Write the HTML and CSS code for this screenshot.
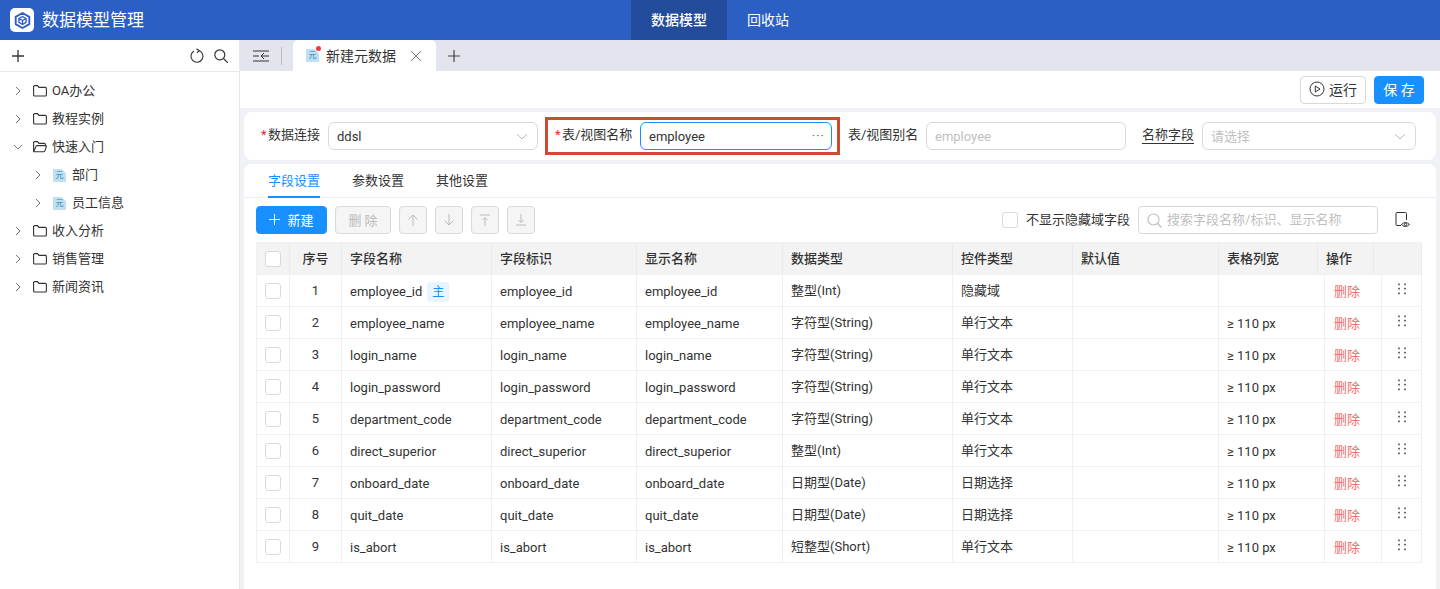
FILE: index.html
```html
<!DOCTYPE html>
<html lang="zh">
<head>
    <meta charset="UTF-8">
    <title>数据模型管理</title>
    <link rel="stylesheet" href="styles.css">
</head>
<body>
    <!-- 顶部导航 -->
    <header class="topbar">
        <div class="brand">
            <span class="logo">
                <svg width="17" height="17" viewBox="0 0 20 20" fill="none" stroke="#2b5fc4" stroke-width="2.200" stroke-linejoin="round"><path d="M10 1.200 18 5.700v8.600l-8 4.500-8-4.500V5.700z"/><path d="M10 5.300 14.200 7.700v4.600L10 14.700l-4.200-2.400V7.700z" stroke-width="1.600"/><path d="M5.800 7.700 10 10l4.200-2.300M10 10v4.700" stroke-width="1.600"/></svg>
            </span>
            <span class="brand-name">数据模型管理</span>
        </div>
        <nav class="topnav">
            <a class="topnav-item active">数据模型</a>
            <a class="topnav-item">回收站</a>
        </nav>
    </header>

    <div class="main">
        <!-- 左侧树 -->
        <aside class="sidebar">
            <div class="side-tools">
                <svg class="side-add" width="14" height="14" viewBox="0 0 14 14" stroke="#333" stroke-width="1.300"><path d="M7 1v12M1 7h12"/></svg>
                <svg class="side-refresh" width="16" height="16" viewBox="0 0 16 16" fill="none" stroke="#333" stroke-width="1.100"><path d="M9.800 2.500A6 6 0 1 1 5 3"/><path d="M7.500 .8 10 2.600 8 4.800"/></svg>
                <svg width="16" height="16" viewBox="0 0 16 16" fill="none" stroke="#333" stroke-width="1.200"><circle cx="6.800" cy="6.800" r="5"/><path d="m10.500 10.500 4.300 4.300"/></svg>
            </div>
            <ul class="tree">
                <li class="tree-item">
                    <svg class="arrow" width="6" height="10" viewBox="0 0 6 10" fill="none"><path d="m1 1 4 4-4 4"/></svg>
                    <svg class="folder" width="14" height="12" viewBox="0 0 14 12" fill="none"><path d="M.6 1.600q0-1 1-1h3l1.400 1.800h6.400q1 0 1 1v6.600q0 1-1 1H1.600q-1 0-1-1z"/></svg>
                    OA办公
                </li>
                <li class="tree-item">
                    <svg class="arrow" width="6" height="10" viewBox="0 0 6 10" fill="none"><path d="m1 1 4 4-4 4"/></svg>
                    <svg class="folder" width="14" height="12" viewBox="0 0 14 12" fill="none"><path d="M.6 1.600q0-1 1-1h3l1.400 1.800h6.400q1 0 1 1v6.600q0 1-1 1H1.600q-1 0-1-1z"/></svg>
                    教程实例
                </li>
                <li class="tree-item">
                    <svg class="arrow open" width="10" height="6" viewBox="0 0 10 6" fill="none"><path d="m1 1 4 4 4-4"/></svg>
                    <svg class="folder" width="14" height="12" viewBox="0 0 14 12" fill="none"><path d="M.6 10.400V1.600q0-1 1-1h3l1.400 1.800h5.400q1 0 1 1v1.200M.6 10.900 3 5.200q.2-.6 1-.6h8.800q.8 0 .6.700l-1.600 4.900q-.2.600-1 .6H1.200q-.6 0-.6-.6z"/></svg>
                    快速入门
                </li>
                <li class="tree-item child">
                    <svg class="arrow" width="6" height="10" viewBox="0 0 6 10" fill="none"><path d="m1 1 4 4-4 4"/></svg>
                    <span class="doc-icon">元</span>
                    部门
                </li>
                <li class="tree-item child">
                    <svg class="arrow" width="6" height="10" viewBox="0 0 6 10" fill="none"><path d="m1 1 4 4-4 4"/></svg>
                    <span class="doc-icon">元</span>
                    员工信息
                </li>
                <li class="tree-item">
                    <svg class="arrow" width="6" height="10" viewBox="0 0 6 10" fill="none"><path d="m1 1 4 4-4 4"/></svg>
                    <svg class="folder" width="14" height="12" viewBox="0 0 14 12" fill="none"><path d="M.6 1.600q0-1 1-1h3l1.400 1.800h6.400q1 0 1 1v6.600q0 1-1 1H1.600q-1 0-1-1z"/></svg>
                    收入分析
                </li>
                <li class="tree-item">
                    <svg class="arrow" width="6" height="10" viewBox="0 0 6 10" fill="none"><path d="m1 1 4 4-4 4"/></svg>
                    <svg class="folder" width="14" height="12" viewBox="0 0 14 12" fill="none"><path d="M.6 1.600q0-1 1-1h3l1.400 1.800h6.400q1 0 1 1v6.600q0 1-1 1H1.600q-1 0-1-1z"/></svg>
                    销售管理
                </li>
                <li class="tree-item">
                    <svg class="arrow" width="6" height="10" viewBox="0 0 6 10" fill="none"><path d="m1 1 4 4-4 4"/></svg>
                    <svg class="folder" width="14" height="12" viewBox="0 0 14 12" fill="none"><path d="M.6 1.600q0-1 1-1h3l1.400 1.800h6.400q1 0 1 1v6.600q0 1-1 1H1.600q-1 0-1-1z"/></svg>
                    新闻资讯
                </li>
            </ul>
        </aside>

        <section class="content">
            <!-- 标签栏 -->
            <div class="tabbar">
                <svg class="collapse" width="16" height="12" viewBox="0 0 16 12" fill="none" stroke="#333"><path d="M0 1h16M0 11h16M0 6h6M16 6H9M11 3 8 6l3 3"/></svg>
                <span class="tabbar-sep"></span>
                <div class="page-tab">
                    <span class="doc-icon">元<i class="dot"></i></span>
                    <span class="page-tab-name">新建元数据</span>
                    <svg width="12" height="12" viewBox="0 0 12 12" stroke="#777"><path d="m1 1 10 10M11 1 1 11"/></svg>
                </div>
                <svg class="tab-add" width="12" height="12" viewBox="0 0 12 12" stroke="#444" stroke-width="1.200"><path d="M6 0v12M0 6h12"/></svg>
            </div>

            <div class="actions">
                <button class="btn btn-run">
                    <svg width="16" height="16" viewBox="0 0 16 16" fill="none" stroke="#333"><circle cx="8" cy="8" r="7"/><path d="M6.300 5v6L11 8z"/></svg>
                    运行
                </button>
                <button class="btn btn-save">保 存</button>
            </div>

            <!-- 基本信息 -->
            <div class="form-card">
                <label class="form-label w-59"><em>*</em>数据连接</label>
                <div class="field w-210"><span>ddsl</span>
                    <svg class="chevron" width="12" height="7" viewBox="0 0 12 7" fill="none"><path d="m1 1 5 5 5-5"/></svg>
                </div>
                <div class="marked">
                    <label class="form-label w-78"><em>*</em>表/视图名称</label>
                    <div class="field focus w-192"><span>employee</span><b class="more">···</b></div>
                </div>
                <label class="form-label w-70">表/视图别名</label>
                <div class="field w-200 empty"><span>employee</span></div>
                <label class="form-label under">名称字段</label>
                <div class="field w-214 empty"><span>请选择</span>
                    <svg class="chevron" width="12" height="7" viewBox="0 0 12 7" fill="none"><path d="m1 1 5 5 5-5"/></svg>
                </div>
            </div>

            <!-- 字段设置 -->
            <div class="fields-card">
                <div class="sub-tabs">
                    <a class="sub-tab active">字段设置</a>
                    <a class="sub-tab">参数设置</a>
                    <a class="sub-tab">其他设置</a>
                </div>
                <div class="fields-body">
                    <div class="toolbar">
                        <button class="btn btn-new">
                            <svg width="11" height="11" viewBox="0 0 11 11" stroke="#fff"><path d="M5.500 0v11M0 5.500h11"/></svg>
                            新建
                        </button>
                        <button class="btn btn-off btn-del">删 除</button>
                        <button class="btn btn-off btn-icon"><svg width="12" height="12" viewBox="0 0 12 12" fill="none" stroke="#bbb"><path d="M6 12V1M1.500 5.500 6 1l4.500 4.500"/></svg></button>
                        <button class="btn btn-off btn-icon"><svg width="12" height="12" viewBox="0 0 12 12" fill="none" stroke="#bbb"><path d="M6 0v11M1.500 6.500 6 11l4.500-4.500"/></svg></button>
                        <button class="btn btn-off btn-icon"><svg width="12" height="12" viewBox="0 0 12 12" fill="none" stroke="#bbb"><path d="M1 1h10M6 12V4M3.500 6 6 3.500 8.500 6"/></svg></button>
                        <button class="btn btn-off btn-icon"><svg width="12" height="12" viewBox="0 0 12 12" fill="none" stroke="#bbb"><path d="M1 11h10M6 0v8M3.500 6 6 8.500 8.500 6"/></svg></button>
                        <span class="check check-hide"></span>
                        <span class="hide-label">不显示隐藏域字段</span>
                        <div class="search">
                            <svg width="15" height="15" viewBox="0 0 15 15" fill="none" stroke="#bbb" stroke-width="1.100"><circle cx="6.500" cy="6.500" r="5.500"/><path d="m10.500 10.500 4 4"/></svg>
                            搜索字段名称/标识、显示名称
                        </div>
                        <svg class="eye" width="15" height="16" viewBox="0 0 15 16" fill="none" stroke="#333"><path d="M6 13.500H2q-1 0-1-1V1.500q0-1 1-1h8.500q1 0 1 1V8"/><path d="M6.500 12.500q3.800-4 8 0-4.200 4-8 0z"/><circle cx="10.500" cy="12.500" r="1.200"/></svg>
                    </div>

                    <div class="grid-head">
                        <div class="cell center"><span class="check"></span></div>
                        <div class="cell center">序号</div>
                        <div class="cell">字段名称</div>
                        <div class="cell">字段标识</div>
                        <div class="cell">显示名称</div>
                        <div class="cell">数据类型</div>
                        <div class="cell">控件类型</div>
                        <div class="cell">默认值</div>
                        <div class="cell">表格列宽</div>
                        <div class="cell">操作</div>
                        <div class="cell"></div>
                    </div>

                    <div class="grid-row">
                        <div class="cell center"><span class="check"></span></div>
                        <div class="cell center">1</div>
                        <div class="cell">employee_id<span class="pk">主</span></div>
                        <div class="cell">employee_id</div>
                        <div class="cell">employee_id</div>
                        <div class="cell">整型(Int)</div>
                        <div class="cell">隐藏域</div>
                        <div class="cell"></div>
                        <div class="cell"></div>
                        <div class="cell del">删除</div>
                        <div class="cell center"><span class="grip"></span></div>
                    </div>
                    <div class="grid-row">
                        <div class="cell center"><span class="check"></span></div>
                        <div class="cell center">2</div>
                        <div class="cell">employee_name</div>
                        <div class="cell">employee_name</div>
                        <div class="cell">employee_name</div>
                        <div class="cell">字符型(String)</div>
                        <div class="cell">单行文本</div>
                        <div class="cell"></div>
                        <div class="cell">≥ 110 px</div>
                        <div class="cell del">删除</div>
                        <div class="cell center"><span class="grip"></span></div>
                    </div>
                    <div class="grid-row">
                        <div class="cell center"><span class="check"></span></div>
                        <div class="cell center">3</div>
                        <div class="cell">login_name</div>
                        <div class="cell">login_name</div>
                        <div class="cell">login_name</div>
                        <div class="cell">字符型(String)</div>
                        <div class="cell">单行文本</div>
                        <div class="cell"></div>
                        <div class="cell">≥ 110 px</div>
                        <div class="cell del">删除</div>
                        <div class="cell center"><span class="grip"></span></div>
                    </div>
                    <div class="grid-row">
                        <div class="cell center"><span class="check"></span></div>
                        <div class="cell center">4</div>
                        <div class="cell">login_password</div>
                        <div class="cell">login_password</div>
                        <div class="cell">login_password</div>
                        <div class="cell">字符型(String)</div>
                        <div class="cell">单行文本</div>
                        <div class="cell"></div>
                        <div class="cell">≥ 110 px</div>
                        <div class="cell del">删除</div>
                        <div class="cell center"><span class="grip"></span></div>
                    </div>
                    <div class="grid-row">
                        <div class="cell center"><span class="check"></span></div>
                        <div class="cell center">5</div>
                        <div class="cell">department_code</div>
                        <div class="cell">department_code</div>
                        <div class="cell">department_code</div>
                        <div class="cell">字符型(String)</div>
                        <div class="cell">单行文本</div>
                        <div class="cell"></div>
                        <div class="cell">≥ 110 px</div>
                        <div class="cell del">删除</div>
                        <div class="cell center"><span class="grip"></span></div>
                    </div>
                    <div class="grid-row">
                        <div class="cell center"><span class="check"></span></div>
                        <div class="cell center">6</div>
                        <div class="cell">direct_superior</div>
                        <div class="cell">direct_superior</div>
                        <div class="cell">direct_superior</div>
                        <div class="cell">整型(Int)</div>
                        <div class="cell">单行文本</div>
                        <div class="cell"></div>
                        <div class="cell">≥ 110 px</div>
                        <div class="cell del">删除</div>
                        <div class="cell center"><span class="grip"></span></div>
                    </div>
                    <div class="grid-row">
                        <div class="cell center"><span class="check"></span></div>
                        <div class="cell center">7</div>
                        <div class="cell">onboard_date</div>
                        <div class="cell">onboard_date</div>
                        <div class="cell">onboard_date</div>
                        <div class="cell">日期型(Date)</div>
                        <div class="cell">日期选择</div>
                        <div class="cell"></div>
                        <div class="cell">≥ 110 px</div>
                        <div class="cell del">删除</div>
                        <div class="cell center"><span class="grip"></span></div>
                    </div>
                    <div class="grid-row">
                        <div class="cell center"><span class="check"></span></div>
                        <div class="cell center">8</div>
                        <div class="cell">quit_date</div>
                        <div class="cell">quit_date</div>
                        <div class="cell">quit_date</div>
                        <div class="cell">日期型(Date)</div>
                        <div class="cell">日期选择</div>
                        <div class="cell"></div>
                        <div class="cell">≥ 110 px</div>
                        <div class="cell del">删除</div>
                        <div class="cell center"><span class="grip"></span></div>
                    </div>
                    <div class="grid-row">
                        <div class="cell center"><span class="check"></span></div>
                        <div class="cell center">9</div>
                        <div class="cell">is_abort</div>
                        <div class="cell">is_abort</div>
                        <div class="cell">is_abort</div>
                        <div class="cell">短整型(Short)</div>
                        <div class="cell">单行文本</div>
                        <div class="cell"></div>
                        <div class="cell">≥ 110 px</div>
                        <div class="cell del">删除</div>
                        <div class="cell center"><span class="grip"></span></div>
                    </div>
                </div>
            </div>
        </section>
    </div>
</body>
</html>
```
FILE: styles.css
```css
* {
    box-sizing: border-box;
}

html, body {
    height: 100%;
}

body {
    margin: 0;
    overflow: hidden;
    font-family: Roboto, "Noto Sans CJK SC", sans-serif;
    font-size: 13px;
    line-height: 20px;
    color: #333;
    background-color: #fff;
    display: flex;
    flex-direction: column;
}

/* Barra superior */
.topbar {
    height: 40px;
    flex: none;
    background-color: #2b5fc4;
    color: #fff;
    display: flex;
    position: relative;
}

.brand {
    display: flex;
    align-items: center;
    padding-left: 10px;
    gap: 8px;
}

.logo {
    width: 24px;
    height: 24px;
    border-radius: 5px;
    background-color: #fff;
    display: flex;
    align-items: center;
    justify-content: center;
}

.brand-name {
    font-size: 17px;
}

.topnav {
    display: flex;
    margin-left: 487px;
}

.topnav-item {
    padding: 0 20px;
    font-size: 14px;
    line-height: 40px;
    text-align: center;
}

.topnav-item.active {
    background-color: #234d9c;
    font-weight: 500;
}

.main {
    flex: 1;
    display: flex;
    min-height: 0;
}

/* Arbol */
.sidebar {
    width: 240px;
    flex: none;
    border-right: 1px solid #e6e8ee;
}

.side-tools {
    height: 32px;
    display: flex;
    align-items: center;
    gap: 8px;
    padding: 0 10px 0 11px;
    border-bottom: 1px solid #e6e8ee;
}

.side-add {
    margin-right: auto;
}

.tree {
    list-style: none;
    margin: 5px 0 0;
    padding: 0;
}

.tree-item {
    height: 28px;
    display: flex;
    align-items: center;
    padding-left: 15px;
    font-size: 13px;
}

.tree-item .arrow {
    margin-right: 12px;
}

.tree-item .arrow path {
    stroke: #777;
}

.tree-item .arrow.open {
    margin-left: -2px;
    margin-right: 10px;
}

.tree-item .folder {
    margin-right: 5px;
}

.tree-item .folder path {
    stroke: #333;
    stroke-width: 1.100;
}

.tree-item.child {
    padding-left: 35px;
}

.tree-item.child .doc-icon {
    margin-right: 6px;
}

.doc-icon {
    width: 13px;
    height: 13px;
    flex: none;
    background: linear-gradient(225deg, #fff 3px, #bfe0f3 3px);
    color: #2b7fb5;
    font-size: 8px;
    line-height: 14px;
    text-align: center;
    position: relative;
}

.content {
    flex: 1;
    min-width: 0;
    background-color: #f0f2f6;
    display: flex;
    flex-direction: column;
}

/* Pestanas */
.tabbar {
    height: 31px;
    flex: none;
    background-color: #e2e5ee;
    display: flex;
    align-items: center;
    padding-left: 13px;
}

.tabbar-sep {
    width: 1px;
    height: 18px;
    background-color: #bbb;
    margin: 0 11px 0 12px;
}

.page-tab {
    width: 143px;
    height: 31px;
    background-color: #fff;
    border-radius: 5px 5px 0 0;
    display: flex;
    align-items: center;
    padding-left: 13px;
}

.page-tab-name {
    font-size: 14px;
    margin: 0 14px 0 7px;
}

.dot {
    width: 5px;
    height: 5px;
    border-radius: 50%;
    background-color: #f5363a;
    position: absolute;
    top: -3px;
    right: -2px;
}

.tab-add {
    margin-left: 12px;
}

.actions {
    height: 37px;
    flex: none;
    background-color: #fff;
    display: flex;
    justify-content: flex-end;
    align-items: center;
    gap: 8px;
    padding: 0 16px 0 0;
}

.btn {
    height: 28px;
    border-radius: 4px;
    font-family: inherit;
    font-size: 13px;
    padding: 0 0 2px;
    display: inline-flex;
    align-items: center;
    justify-content: center;
    border: 1px solid #d9d9d9;
    background-color: #fff;
    color: #333;
}

.btn-icon {
    padding-bottom: 0;
}

.btn-run {
    width: 66px;
    gap: 4px;
    font-size: 14px;
}

.btn-save {
    width: 50px;
    background-color: #1890ff;
    border-color: #1890ff;
    color: #fff;
    font-size: 14px;
}

/* Formulario */
.form-card {
    height: 48px;
    flex: none;
    margin: 4px 4px 0;
    background-color: #fff;
    border-radius: 8px;
    display: flex;
    align-items: center;
    padding-left: 17px;
}

.form-label {
    flex: none;
    margin-right: 8px;
    margin-top: -3px;
    white-space: nowrap;
}

.form-label em {
    display: inline-block;
    width: 7px;
    color: #f5222d;
    font-style: normal;
}

.form-label.under {
    margin-left: 16px;
    margin-top: -2px;
    border-bottom: 1px solid #333;
    line-height: 17px;
}

.w-59 {
    width: 59px;
}

.w-78 {
    width: 77px;
}

.w-70 {
    width: 70px;
}

.field {
    flex: none;
    height: 28px;
    border: 1px solid #d9d9d9;
    border-radius: 6px;
    display: flex;
    align-items: center;
    justify-content: space-between;
    padding: 0 8px;
}

.field span {
    margin-top: 2px;
}

.field .chevron path {
    stroke: #bbb;
}

.field .chevron {
    margin-right: 1px;
}

.field.empty {
    color: #bfbfbf;
}

.field.focus {
    border-color: #1890ff;
}

.more {
    font-weight: 400;
    color: #666;
    font-size: 13px;
    letter-spacing: 1px;
    margin-right: -2px;
}

.w-210 {
    width: 210px;
}

.w-192 {
    width: 192px;
}

.w-200 {
    width: 200px;
}

.w-214 {
    width: 214px;
}

.marked {
    flex: none;
    width: 295px;
    height: 38px;
    margin: 0 8px 0 7px;
    border: 3px solid #cf4a32;
    display: flex;
    align-items: center;
    padding-left: 7px;
}

.fields-card {
    flex: 1;
    margin: 4px 4px 0;
    background-color: #fff;
    border-radius: 8px 8px 0 0;
    display: flex;
    flex-direction: column;
    min-height: 0;
}

.sub-tabs {
    height: 34px;
    flex: none;
    display: flex;
    gap: 32px;
    padding-left: 24px;
    border-bottom: 1px solid #eceef2;
}

.sub-tab {
    height: 34px;
    line-height: 34px;
}

.sub-tab.active {
    color: #1890ff;
    border-bottom: 2px solid #1890ff;
}

.fields-body {
    flex: 1;
    padding: 8px 0 0 12px;
    margin-right: 2px;
}

.toolbar {
    height: 28px;
    display: flex;
    align-items: center;
    margin-bottom: 8px;
}

.btn-new {
    width: 71px;
    background-color: #1890ff;
    border-color: #1890ff;
    color: #fff;
    gap: 7px;
}

.btn-off {
    background-color: #f5f5f5;
    color: #bbb;
    margin-left: 8px;
}

.btn-del {
    width: 56px;
}

.btn-icon {
    width: 28px;
}

.check {
    width: 16px;
    height: 16px;
    border: 1px solid #d9d9d9;
    border-radius: 3px;
    display: inline-block;
    background-color: #fff;
}

.check-hide {
    margin-left: 467px;
}

.hide-label {
    margin-left: 8px;
}

.search {
    width: 240px;
    height: 28px;
    margin-left: 8px;
    border: 1px solid #d9d9d9;
    border-radius: 4px;
    display: flex;
    align-items: center;
    gap: 5px;
    padding-left: 8px;
    color: #bfbfbf;
}

.eye {
    margin-left: 17px;
}

/* Tabla */
.grid-head, .grid-row {
    width: 1166px;
    display: grid;
    border-left: 1px solid #f0f0f0;
    border-bottom: 1px solid #f0f0f0;
}

.grid-head {
    height: 33px;
    grid-template-columns: 33px 52px 150px 145px 146px 170px 120px 146px 99px 56px 48px;
    background-color: #f3f3f4;
    border-top: 1px solid #f0f0f0;
    font-weight: 500;
}

.grid-row {
    height: 32px;
    grid-template-columns: 33px 52px 150px 145px 146px 170px 120px 146px 106px 57px 40px;
}

.cell {
    border-right: 1px solid #f0f0f0;
    padding-left: 8px;
    display: flex;
    align-items: center;
    white-space: nowrap;
}

/* Las columnas latinas van 1px mas abajo */
.grid-row .cell:nth-child(n+3):nth-child(-n+5),
.grid-row .cell:nth-child(n+9):nth-child(-n+10) {
    padding-top: 2px;
}

.grid-head .cell {
    border-right-color: #eaeaea;
}

.cell.center {
    padding-left: 0;
    justify-content: center;
}

.pk {
    width: 22px;
    height: 20px;
    margin-left: 5px;
    border-radius: 3px;
    background-color: #e8f4ff;
    color: #1890ff;
    font-size: 12px;
    text-align: center;
    line-height: 20px;
}

.del {
    color: #f56c6c;
    padding-left: 9px;
}

.grip {
    width: 8px;
    height: 14px;
    margin-bottom: 3px;
    background: radial-gradient(circle, #444 .8px, transparent 1.100px) -2px 0 / 6px 4.500px;
}
```
